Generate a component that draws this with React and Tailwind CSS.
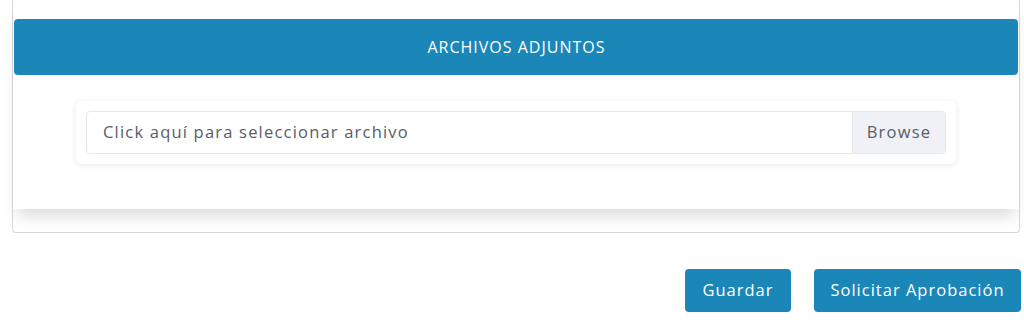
export default function App() {
  const font = { fontFamily: '"Open Sans", "Noto Sans", sans-serif' };
  return (
    <div className="w-[1024px] h-[323px] bg-white overflow-hidden" style={font}>
      <div className="ml-[12px] mr-[4px] border-x border-b border-[#d6d8dc] rounded-b-[4px] pb-[23px]">
        <div className="bg-white shadow-[0_12px_14px_-4px_rgba(0,0,0,0.13)] pt-[19px] pb-[45px] px-px">
          <div className="h-[56px] bg-[#1b86b8] rounded-[4px] flex items-center justify-center">
            <span className="text-white text-[16px] tracking-[1px] pl-[1px]">ARCHIVOS ADJUNTOS</span>
          </div>
          <div className="mt-[26px] mx-[62px] rounded-[6px] bg-white shadow-[0_1px_6px_rgba(0,0,0,0.09)] p-[10px]">
            <div className="flex h-[43px] border border-[#e6e7eb] rounded-[4px] overflow-hidden">
              <div className="flex-1 flex items-center pl-[16px] text-[16.5px] tracking-[1.2px] text-[#585d68]">
                Click aquí para seleccionar archivo
              </div>
              <div className="w-[93px] bg-[#f0f1f6] border-l border-[#e6e7eb] flex items-center justify-center text-[16.5px] tracking-[1.2px] text-[#585d68]">
                Browse
              </div>
            </div>
          </div>
        </div>
      </div>
      <div className="flex justify-end gap-[23px] mt-[36px] pr-[3px]">
        <button className="w-[106px] h-[43px] bg-[#1b86b8] text-white text-[16.5px] tracking-[1px] rounded-[4px]">Guardar</button>
        <button className="w-[207px] h-[43px] bg-[#1b86b8] text-white text-[16.5px] tracking-[1px] rounded-[4px]">Solicitar Aprobación</button>
      </div>
    </div>
  );
}
